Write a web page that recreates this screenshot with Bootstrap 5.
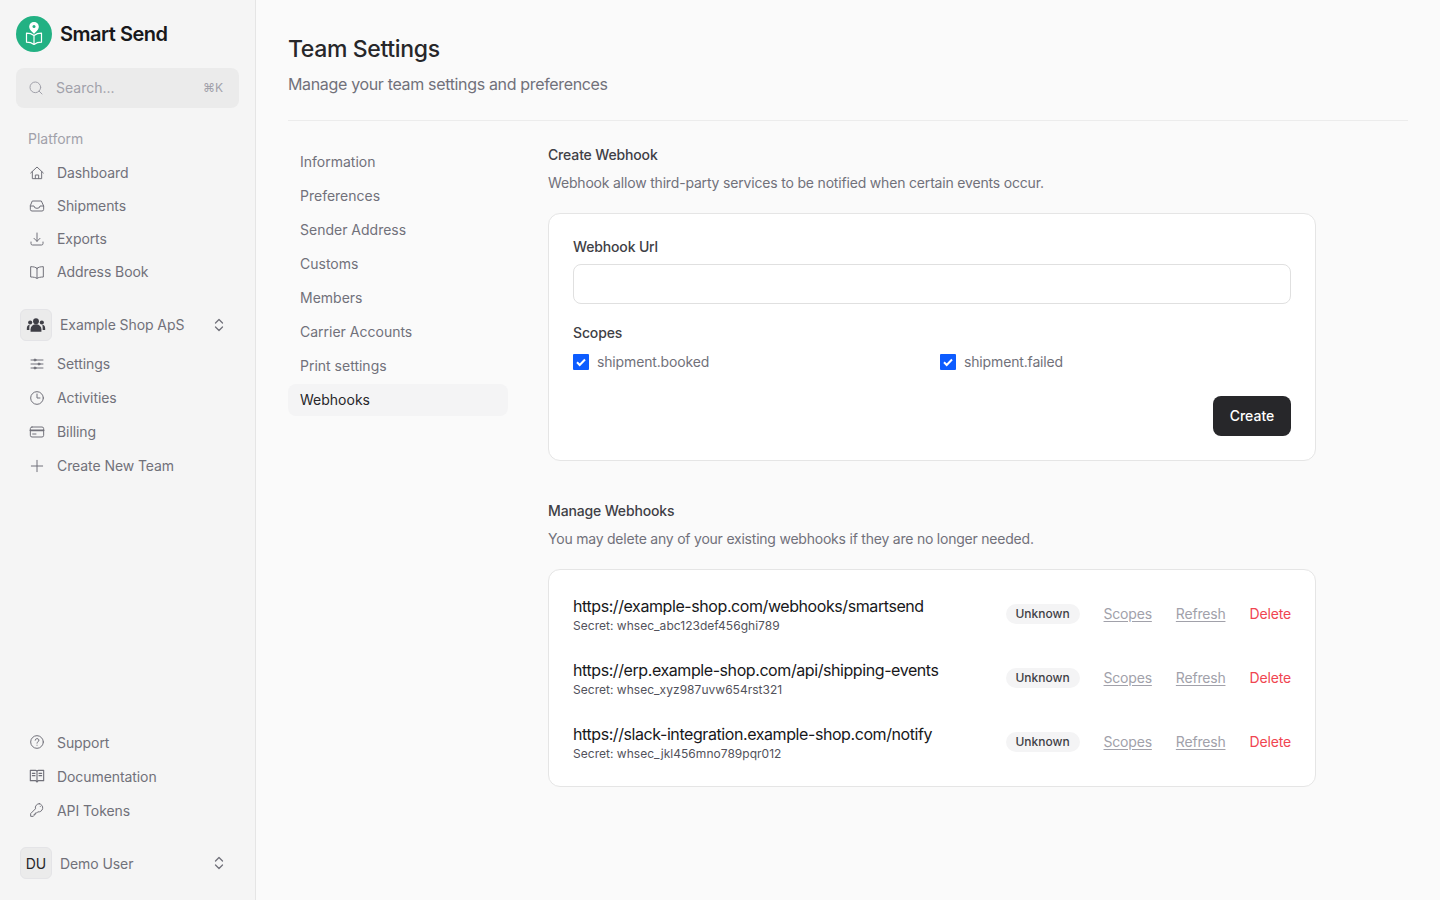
<!DOCTYPE html>
<html lang="en">
<head>
  <meta charset="UTF-8">
  <meta name="viewport" content="width=device-width, initial-scale=1.0">
  <title>Team Settings</title>
  <link href="https://cdn.jsdelivr.net/npm/bootstrap@5.3.0/dist/css/bootstrap.min.css" rel="stylesheet">
  <script src="https://cdn.jsdelivr.net/npm/bootstrap@5.3.0/dist/js/bootstrap.bundle.min.js"></script>
  <style>
    body {
      font-family: Inter, "Liberation Sans", sans-serif;
      font-size: 14px;
      background-color: #fafafa;
      color: #27272a;
      height: 900px;
      overflow: hidden;
    }

    .side {
      width: 256px;
      height: 900px;
      flex: none;
      background-color: #f5f5f5;
      border-right: 1px solid #e5e5e5;
      padding: 16px 16px 21px;
    }

    .logo-row { height: 36px; gap: 8px; }
    .logo-mark {
      width: 36px; height: 36px;
      border-radius: 50%;
      background-color: #22b183;
    }
    .logo-name { font-size: 20px; font-weight: 600; color: #18181b; letter-spacing: -0.5px; }

    .side-search {
      height: 40px;
      margin-top: 16px;
      padding: 0 16px 0 12px;
      border-radius: 8px;
      background-color: #ebebeb;
      color: #a1a1aa;
    }
    .side-search .kbd-hint { font-size: 12px; margin-left: auto; }
    .side-search span.ph { margin-left: 12px; margin-top: -1px; }

    .side-head { margin: 21px 0 0 12px; height: 20px; line-height: 20px; color: #a1a1aa; }

    .side-link {
      display: flex;
      align-items: center;
      gap: 12px;
      padding-left: 13px;
      color: #71717a;
      text-decoration: none;
      letter-spacing: -0.08px;
    }
    .side-link svg { width: 16px; height: 16px; flex: none; }
    .links-a { margin-top: 7px; }
    .links-a .side-link { height: 33px; }
    .links-b { margin-top: 6px; }
    .links-b .side-link, .links-c .side-link { height: 34px; }

    .switcher { margin: 20.5px 0 0 4px; height: 32px; padding-right: 13px; gap: 8px; color: #71717a; letter-spacing: -0.08px; }
    .links-c .switcher { margin-top: 20px; }
    .avatar-box {
      width: 32px; height: 32px;
      border-radius: 6px;
      border: 1px solid #e4e4e7;
      background-color: #ebebeb;
      color: #27272a;
      flex: none;
    }
    .switcher .chev { margin-left: auto; width: 14px; height: 16px; }

    .main-area { padding: 32px; }
    .page-title { font-size: 23px; font-weight: 500; line-height: 34px; margin: 0; color: #27272a; letter-spacing: -0.35px; }
    .page-sub { font-size: 16px; line-height: 24px; margin: 6px 0 0; color: #71717a; letter-spacing: -0.34px; }
    .head-rule { height: 1px; background-color: #ececec; margin-top: 24px; }

    .sub-nav { width: 220px; flex: none; margin-top: 25px; margin-right: 40px; }
    .sub-nav a {
      display: block;
      height: 32px;
      line-height: 32px;
      padding: 0 12px;
      margin-bottom: 2px;
      border-radius: 8px;
      color: #71717a;
      text-decoration: none;
    }
    .sub-nav a.on { background-color: #f4f4f5; color: #27272a; }

    .content-col { width: 768px; margin-top: 24px; }
    .sec-title { font-weight: 500; line-height: 20px; color: #3f3f46; letter-spacing: -0.15px; }
    .sec-title.second { margin-top: 40px; }
    .sec-desc { line-height: 20px; margin-top: 8px; color: #71717a; letter-spacing: -0.18px; }
    .sec-desc.tight { letter-spacing: -0.22px; }
    .panel {
      background-color: #fff;
      border: 1px solid #e5e5e5;
      border-radius: 12px;
      margin-top: 20px;
      padding: 0 24px;
    }
    .panel.hook-list { padding-top: 12px; padding-bottom: 12px; }
    .field-label { font-weight: 500; color: #3f3f46; line-height: 20px; letter-spacing: -0.15px; }
    .url-input { height: 40px; border-color: #e0e0e0; border-radius: 8px; margin-top: 7px; box-shadow: none; }
    .form-top { padding-top: 23px; padding-bottom: 24px; }
    .scope-head { margin-top: 19px; }
    .scope-row { margin-top: 9px; }
    .scope-box {
      width: 16px; height: 16px;
      margin: 0;
      flex: none;
      border-radius: 1px;
      border: 0;
      background-color: #0d5cff;
    }
    .scope-text { color: #71717a; line-height: 20px; letter-spacing: -0.15px; }
    .go-btn {
      width: 78px; height: 40px;
      padding: 0 0 2px;
      font-size: 14px;
      font-weight: 500;
      color: #fff;
      background-color: #27272a;
      border: 0;
      border-radius: 8px;
    }
    .hook-row { height: 64px; }
    .hook-url { font-size: 16px; line-height: 24px; color: #18181b; letter-spacing: -0.42px; }
    .hook-secret { font-size: 12px; line-height: 16px; color: #52525b; letter-spacing: 0.03px; }
    .hook-tag {
      font-size: 12px;
      font-weight: 500;
      line-height: 20px;
      width: 74px;
      text-align: center;
      border-radius: 10px;
      background-color: #f4f4f5;
      color: #3f3f46;
      margin-right: 24px;
    }
    .hook-act { color: #a1a1aa; margin: 0 24px 2px 0; text-decoration: underline; text-underline-offset: 2px; letter-spacing: -0.2px; }
    .hook-del { color: #f04550; margin-bottom: 2px; text-decoration: none; letter-spacing: -0.15px; }
  </style>
</head>
<body>
  <div class="d-flex">
    <aside class="side d-flex flex-column">
      <div class="logo-row d-flex align-items-center">
        <div class="logo-mark d-flex align-items-center justify-content-center">
          <svg width="22" height="26" viewBox="0 0 22 26" fill="none" stroke="#fff" stroke-width="1.2" stroke-linejoin="round">
            <path d="M11 1.500a4.200 4.200 0 0 0-4.200 4.200c0 2.600 2.600 4.800 4.200 6.300 1.600-1.500 4.200-3.700 4.200-6.300A4.200 4.200 0 0 0 11 1.500z" fill="#fff"/>
            <circle cx="11" cy="5.600" r="1.500" fill="#22b183" stroke="none"/>
            <path d="M11 14.500c-2-1.500-4.500-2.300-7.500-2.300v9c3 0 5.500.8 7.500 2.300 2-1.500 4.500-2.300 7.500-2.300v-9c-3 0-5.500.8-7.500 2.300zM11 14.500v9"/>
          </svg>
        </div>
        <span class="logo-name">Smart Send</span>
      </div>

      <div class="side-search d-flex align-items-center">
        <svg width="16" height="16" viewBox="0 0 24 24" fill="none" stroke="#a1a1aa" stroke-width="1.500" stroke-linecap="round"><circle cx="11" cy="11" r="8"/><path d="M21 21l-4.300-4.300"/></svg>
        <span class="ph">Search...</span>
        <span class="kbd-hint">⌘K</span>
      </div>

      <div class="side-head">Platform</div>
      <nav class="links-a">
        <a class="side-link" href="#"><svg viewBox="0 0 24 24" fill="none" stroke="#71717a" stroke-width="1.500" stroke-linecap="round" stroke-linejoin="round"><path d="M2.500 12L12 3l9.500 9M5 10v10.500h14V10M9.500 20.500V15h5v5.500"/></svg>Dashboard</a>
        <a class="side-link" href="#"><svg viewBox="0 0 24 24" fill="none" stroke="#71717a" stroke-width="1.500" stroke-linecap="round" stroke-linejoin="round"><path d="M5.500 4.500h13L22 12v5a2.500 2.500 0 0 1-2.500 2.500h-15A2.500 2.500 0 0 1 2 17v-5zM2 12h5.500a4.500 3.500 0 0 0 9 0H22"/></svg>Shipments</a>
        <a class="side-link" href="#"><svg viewBox="0 0 24 24" fill="none" stroke="#71717a" stroke-width="1.500" stroke-linecap="round" stroke-linejoin="round"><path d="M3 16.500v2.300A2.200 2.200 0 0 0 5.200 21h13.600a2.200 2.200 0 0 0 2.200-2.200v-2.300M7.500 11l4.500 4.500 4.500-4.500M12 3v12.500"/></svg>Exports</a>
        <a class="side-link" href="#"><svg viewBox="0 0 24 24" fill="none" stroke="#71717a" stroke-width="1.500" stroke-linecap="round" stroke-linejoin="round"><path d="M12 6.500C10 4.800 7 4 2.500 4v15.500c4.500 0 7.500.8 9.500 2 2-1.200 5-2 9.500-2V4C17 4 14 4.800 12 6.500zM12 6.500v15"/></svg>Address Book</a>
      </nav>

      <div class="switcher d-flex align-items-center">
        <div class="avatar-box d-flex align-items-center justify-content-center">
          <svg width="20" height="20" viewBox="0 0 24 24" fill="#3f3f46"><circle cx="12" cy="7.500" r="3.500"/><circle cx="5" cy="9" r="2.500"/><circle cx="19" cy="9" r="2.500"/><path d="M5.500 20v-3a6.500 6 0 0 1 13 0v3z"/><path d="M1 18v-2c0-2.500 1.500-4 3.500-4.200C4 13 4 15 4 18zM23 18v-2c0-2.500-1.500-4-3.500-4.200.5 1.200.5 3.200.5 6.200z"/></svg>
        </div>
        <span>Example Shop ApS</span>
        <svg class="chev" viewBox="0 0 14 16" fill="none" stroke="#71717a" stroke-width="1.300" stroke-linecap="round" stroke-linejoin="round"><path d="M3.500 6L7 2.500 10.500 6M3.500 10L7 13.500 10.500 10"/></svg>
      </div>
      <nav class="links-b">
        <a class="side-link" href="#"><svg viewBox="0 0 24 24" fill="none" stroke="#71717a" stroke-width="1.500" stroke-linecap="round"><path d="M3 6h18M3 12h18M3 18h18"/><circle cx="9" cy="6" r="1.500" fill="#71717a"/><circle cx="15" cy="12" r="1.500" fill="#71717a"/><circle cx="9" cy="18" r="1.500" fill="#71717a"/></svg>Settings</a>
        <a class="side-link" href="#"><svg viewBox="0 0 24 24" fill="none" stroke="#71717a" stroke-width="1.500" stroke-linecap="round" stroke-linejoin="round"><circle cx="12" cy="12" r="9.500"/><path d="M12 6v6h4.500"/></svg>Activities</a>
        <a class="side-link" href="#"><svg viewBox="0 0 24 24" fill="none" stroke="#71717a" stroke-width="1.500" stroke-linecap="round" stroke-linejoin="round"><rect x="2" y="4.500" width="20" height="15" rx="2.500"/><path d="M2 9.500h20" stroke-width="2.500"/><path d="M5.500 15h5"/></svg>Billing</a>
        <a class="side-link" href="#"><svg viewBox="0 0 24 24" fill="none" stroke="#71717a" stroke-width="1.500" stroke-linecap="round"><path d="M12 3.500v17M3.500 12h17"/></svg>Create New Team</a>
      </nav>

      <nav class="links-c mt-auto">
        <a class="side-link" href="#"><svg viewBox="0 0 24 24" fill="none" stroke="#71717a" stroke-width="1.500" stroke-linecap="round" stroke-linejoin="round"><circle cx="12" cy="12" r="9.500"/><path d="M9.300 9.300a2.800 2.500 0 1 1 4 2.400c-.8.5-1.300 1-1.300 2"/><path d="M12 16.800v.1"/></svg>Support</a>
        <a class="side-link" href="#"><svg viewBox="0 0 24 24" fill="none" stroke="#71717a" stroke-width="1.700" stroke-linecap="round" stroke-linejoin="round"><path d="M2 3.500h8a2 2 0 0 1 2 2 2 2 0 0 1 2-2h8v15.500h-8l-2 2-2-2H2zM12 5.500V19M5 8h4M5 11.500h4M15 8h4M15 11.500h4"/></svg>Documentation</a>
        <a class="side-link" href="#"><svg viewBox="0 0 24 24" fill="none" stroke="#71717a" stroke-width="1.500" stroke-linecap="round" stroke-linejoin="round"><path d="M15.500 2.500a6 6 0 0 0-5.800 7.700L2.500 17.400V21.500h4l1-1v-2h2v-2h2l1.600-1.700A6 6 0 1 0 15.500 2.500z"/><path d="M17 6.500v.1"/></svg>API Tokens</a>
        <div class="switcher d-flex align-items-center">
          <div class="avatar-box d-flex align-items-center justify-content-center">DU</div>
          <span>Demo User</span>
          <svg class="chev" viewBox="0 0 14 16" fill="none" stroke="#71717a" stroke-width="1.300" stroke-linecap="round" stroke-linejoin="round"><path d="M3.500 6L7 2.500 10.500 6M3.500 10L7 13.500 10.500 10"/></svg>
        </div>
      </nav>
    </aside>

    <main class="main-area flex-grow-1">
      <h1 class="page-title">Team Settings</h1>
      <p class="page-sub">Manage your team settings and preferences</p>
      <div class="head-rule"></div>

      <div class="d-flex">
        <nav class="sub-nav">
          <a href="#">Information</a>
          <a href="#">Preferences</a>
          <a href="#">Sender Address</a>
          <a href="#">Customs</a>
          <a href="#">Members</a>
          <a href="#">Carrier Accounts</a>
          <a href="#">Print settings</a>
          <a href="#" class="on">Webhooks</a>
        </nav>

        <div class="content-col">
          <div class="sec-title">Create Webhook</div>
          <div class="sec-desc">Webhook allow third-party services to be notified when certain events occur.</div>
          <form class="panel form-top" onsubmit="return false">
            <label class="field-label d-block">Webhook Url</label>
            <input type="text" class="form-control url-input">
            <div class="field-label scope-head">Scopes</div>
            <div class="row gx-3 scope-row">
              <div class="col-6 d-flex align-items-center gap-2">
                <svg class="scope-box" viewBox="0 0 16 16"><path d="M4 8.300l2.700 2.700L12 5.500" fill="none" stroke="#fff" stroke-width="2"/></svg>
                <span class="scope-text">shipment.booked</span>
              </div>
              <div class="col-6 d-flex align-items-center gap-2">
                <svg class="scope-box" viewBox="0 0 16 16"><path d="M4 8.300l2.700 2.700L12 5.500" fill="none" stroke="#fff" stroke-width="2"/></svg>
                <span class="scope-text">shipment.failed</span>
              </div>
            </div>
            <div class="d-flex justify-content-end mt-4">
              <button class="btn go-btn">Create</button>
            </div>
          </form>

          <div class="sec-title second">Manage Webhooks</div>
          <div class="sec-desc tight">You may delete any of your existing webhooks if they are no longer needed.</div>
          <div class="panel hook-list">
            <div class="hook-row d-flex align-items-center">
              <div class="flex-grow-1">
                <div class="hook-url">https://example-shop.com/webhooks/smartsend</div>
                <div class="hook-secret">Secret: whsec_abc123def456ghi789</div>
              </div>
              <span class="hook-tag">Unknown</span>
              <a href="#" class="hook-act">Scopes</a>
              <a href="#" class="hook-act">Refresh</a>
              <a href="#" class="hook-del">Delete</a>
            </div>
            <div class="hook-row d-flex align-items-center">
              <div class="flex-grow-1">
                <div class="hook-url">https://erp.example-shop.com/api/shipping-events</div>
                <div class="hook-secret">Secret: whsec_xyz987uvw654rst321</div>
              </div>
              <span class="hook-tag">Unknown</span>
              <a href="#" class="hook-act">Scopes</a>
              <a href="#" class="hook-act">Refresh</a>
              <a href="#" class="hook-del">Delete</a>
            </div>
            <div class="hook-row d-flex align-items-center">
              <div class="flex-grow-1">
                <div class="hook-url">https://slack-integration.example-shop.com/notify</div>
                <div class="hook-secret">Secret: whsec_jkl456mno789pqr012</div>
              </div>
              <span class="hook-tag">Unknown</span>
              <a href="#" class="hook-act">Scopes</a>
              <a href="#" class="hook-act">Refresh</a>
              <a href="#" class="hook-del">Delete</a>
            </div>
          </div>
        </div>
      </div>
    </main>
  </div>
</body>
</html>
